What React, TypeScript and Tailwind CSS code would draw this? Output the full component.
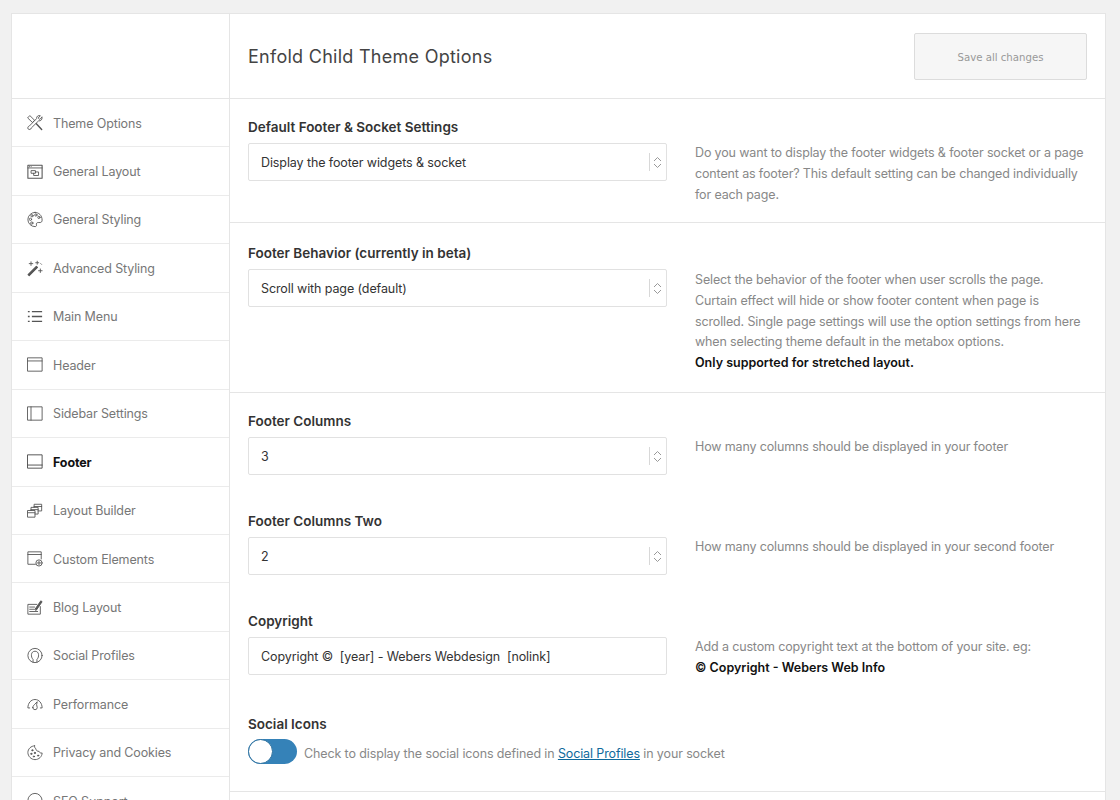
import React from 'react';

const iconProps = {
  width: 17,
  height: 17,
  viewBox: '0 0 18 18',
  fill: 'none',
  stroke: 'currentColor',
  strokeWidth: 1,
  strokeLinecap: 'round' as const,
  strokeLinejoin: 'round' as const,
};

const icons: Record<string, React.ReactNode> = {
  tools: (
    <svg {...iconProps}>
      <path d="M1 3.500 3.200 1.200 8.500 6.500 6.500 8.700z" />
      <path d="M10.500 10.500 16.500 16.800" strokeWidth="1.600" />
      <path d="M16.800 3.200 14.300 5.500 12.600 4 15 1.400C12.800.6 10.500 2 10.800 4.600L2.600 13c-1.600.3-2.200 2.200-1.200 3.400 1.200 1 3.200.4 3.400-1.200L13 7.200c2.600.3 4.600-1.700 3.800-4z" />
    </svg>
  ),
  layout: (
    <svg {...iconProps}>
      <rect x="1" y="2" width="16" height="14.500" strokeWidth="1.200" />
      <path d="M1 5h16M2.800 3.500h.1M4.600 3.500h.1" />
      <path d="M5 8h4.500v3H5zM7.500 11v2.500H13V9.500H9.500" />
    </svg>
  ),
  palette: (
    <svg {...iconProps}>
      <path d="M9 1a8 8 0 1 0 0 16c1.400 0 1.900-.9 1.600-2-.4-1.500.4-2.600 2-2.600h2.200c1.300 0 2.200-1 2.200-2.600C17 4.400 13.400 1 9 1z" />
      <circle cx="5.600" cy="4.800" r="1.300" />
      <circle cx="10" cy="3.900" r="1.300" />
      <circle cx="13.400" cy="6.600" r="1.300" />
      <circle cx="3.900" cy="8.800" r="1.300" />
      <circle cx="5.400" cy="13" r="1.300" />
    </svg>
  ),
  wand: (
    <svg {...iconProps}>
      <path d="M1.200 15.800 10.500 6.500l1.300 1.300-9.300 9.300z" strokeWidth="1.200" fill="currentColor" />
      <path d="M4.500 1.500v4M2.500 3.500h4M11.500.8v3.400M9.800 2.500h3.400M15 9.500v4M13 11.500h4M15.500 3.500l.8.800" />
    </svg>
  ),
  menu: (
    <svg {...iconProps} strokeWidth="1.500" strokeLinecap="butt">
      <path d="M1 3.500h2M5.500 3.500H17M1 9h2M5.500 9H17M1 14.500h2M5.500 14.500H17" />
    </svg>
  ),
  header: (
    <svg {...iconProps}>
      <rect x="1" y="1.500" width="16" height="15" />
      <path d="M1 5h16" />
    </svg>
  ),
  sidebar: (
    <svg {...iconProps}>
      <rect x="1" y="1.500" width="16" height="15" />
      <path d="M4.500 1.500v15" />
    </svg>
  ),
  footer: (
    <svg {...iconProps}>
      <rect x="1" y="1.500" width="16" height="15" />
      <path d="M1 13h16" />
    </svg>
  ),
  builder: (
    <svg {...iconProps}>
      <rect x="1" y="9" width="8" height="7.500" />
      <path d="M1 11.500h8M4.500 9V5.500h8v7.500H9M4.500 8h8" />
      <path d="M8 5.500V2h8.500v7.500h-4M8 4.500h8.500" />
    </svg>
  ),
  custom: (
    <svg {...iconProps}>
      <path d="M9.500 15.500H1v-14h15v8M1 4.500h15" />
      <circle cx="13.500" cy="14" r="3.500" />
      <path d="M13.500 12v4M11.500 14h4" />
    </svg>
  ),
  blog: (
    <svg {...iconProps}>
      <path d="M15 8v8.500H1V5.500h10" />
      <path d="M3 8.500h5.500M3 11h5M3 13.500h9" />
      <path d="M9 11 15.500 1.500l1.500 1L10.500 12z" fill="currentColor" />
    </svg>
  ),
  social: (
    <svg {...iconProps}>
      <circle cx="9" cy="9" r="8" />
      <path d="M6.800 16.500v-3.200C5.200 11.800 4.900 10 5 8c.2-2.400 1.800-3.800 4-3.800s3.800 1.400 4 3.800c.1 2-.2 3.800-1.800 5.300v3.200" />
    </svg>
  ),
  gauge: (
    <svg {...iconProps}>
      <path d="M3 14H1C1 8.500 4.500 4.500 9 4.500s8 4 8 9.500h-2" />
      <path d="M6.500 13.500a2.500 2.500 0 0 0 5 0c0-1.500-.7-1.900-.7-3.200l.7-3.300-2.800 3c-1.200 1-2.200 2-2.200 3.500z" />
    </svg>
  ),
  cookie: (
    <svg {...iconProps}>
      <path d="M8.500 1.500C4.500 1.500 1 5 1 9s3.500 8 8 8 8-3.500 8-7.500c-1.500.5-3-.3-3.500-1.800-1.800.2-3.500-1-3.500-3-1.200-.5-1.600-1.700-1.500-3.200z" />
      <circle cx="6" cy="6.500" r=".7" fill="currentColor" />
      <circle cx="4.800" cy="10.500" r=".7" fill="currentColor" />
      <circle cx="8.800" cy="9.500" r=".7" fill="currentColor" />
      <circle cx="7.800" cy="13.500" r=".7" fill="currentColor" />
      <circle cx="12.500" cy="12.500" r=".7" fill="currentColor" />
    </svg>
  ),
  seo: (
    <svg {...iconProps}>
      <circle cx="9" cy="9" r="8" />
    </svg>
  ),
};

const menuItems = [
  { label: 'Theme Options', icon: 'tools' },
  { label: 'General Layout', icon: 'layout' },
  { label: 'General Styling', icon: 'palette' },
  { label: 'Advanced Styling', icon: 'wand' },
  { label: 'Main Menu', icon: 'menu' },
  { label: 'Header', icon: 'header' },
  { label: 'Sidebar Settings', icon: 'sidebar' },
  { label: 'Footer', icon: 'footer', active: true },
  { label: 'Layout Builder', icon: 'builder' },
  { label: 'Custom Elements', icon: 'custom' },
  { label: 'Blog Layout', icon: 'blog' },
  { label: 'Social Profiles', icon: 'social' },
  { label: 'Performance', icon: 'gauge' },
  { label: 'Privacy and Cookies', icon: 'cookie' },
  { label: 'SEO Support', icon: 'seo' },
];

const Field: React.FC<{ value: string; select?: boolean }> = ({ value, select }) => (
  <div className="flex h-[38px] w-[419px] items-center justify-between rounded-[2px] border border-[#e1e1e1] bg-white pl-3 pr-[4px] text-[12.5px] tracking-[-0.1px] text-[#333]">
    <span className="pt-[3px] whitespace-pre">{value}</span>
    {select && (
      <span className="flex h-[18px] items-center border-l border-[#d8d8d8] pl-[3px] text-[#999]">
        <svg width="9" height="13" viewBox="0 0 9 13" fill="none" stroke="currentColor" strokeWidth="1">
          <path d="M1 5l3.500-3.500L8 5M1 8l3.500 3.500L8 8" />
        </svg>
      </span>
    )}
  </div>
);

const Label: React.FC<{ children: React.ReactNode; className?: string }> = ({ children, className }) => (
  <h3 className={`text-[13.5px] leading-[17px] font-semibold text-[#333] ${className ?? 'mb-[7px]'}`}>{children}</h3>
);

const Help: React.FC<{ children: React.ReactNode; className?: string }> = ({ children, className }) => (
  <div className={`w-[394px] text-[12.5px] leading-[20.8px] tracking-[-0.14px] text-[#888] ${className ?? ''}`}>
    {children}
  </div>
);

export default function App() {
  return (
    <div className="h-[800px] w-[1120px] overflow-hidden bg-[#f1f1f1] pt-[13px] pl-[11px] font-['Inter',sans-serif]">
      <div className="flex w-[1095px] border border-[#e5e5e5] bg-white">
        <aside className="w-[218px] shrink-0 border-r border-[#e5e5e5]">
          <div className="h-[85px] border-b border-[#e5e5e5]" />
          {menuItems.map((item) => (
            <div
              key={item.label}
              className={`flex h-[48.45px] items-center gap-[10px] border-b border-[#ebebeb] pl-[15px] text-[12.5px] tracking-[-0.13px] ${
                item.active ? 'font-bold text-[#111]' : 'text-[#777]'
              }`}
            >
              <span className={`flex w-[16px] shrink-0 justify-center ${item.active ? 'text-[#444]' : 'text-[#555]'}`}>
                {icons[item.icon]}
              </span>
              <span className="pt-[2.5px]">{item.label}</span>
            </div>
          ))}
        </aside>

        <main className="min-w-0 flex-1">
          <header className="flex h-[85px] items-center justify-between border-b border-[#e5e5e5] pr-[18px] pl-[18px]">
            <h1 className="text-[18px] tracking-[0.27px] text-[#444]">Enfold Child Theme Options</h1>
            <button className="mt-[1px] h-[47px] w-[173px] rounded-[2px] border border-[#dcdcdc] bg-[#f6f6f6] pt-[3px] font-['DejaVu_Sans_Condensed','DejaVu_Sans',sans-serif] text-[11.3px] text-[#999]">
              Save all changes
            </button>
          </header>

          <section className="h-[124px] border-b border-[#e5e5e5] pt-[20px] pl-[18px]">
            <Label>Default Footer &amp; Socket Settings</Label>
            <div className="flex gap-[28px]">
              <Field value="Display the footer widgets &amp; socket" select />
              <Help>
                Do you want to display the footer widgets &amp; footer socket or a page content as footer? This
                default setting can be changed individually for each page.
              </Help>
            </div>
          </section>

          <section className="h-[170px] border-b border-[#e5e5e5] pt-[22px] pl-[18px]">
            <Label>Footer Behavior (currently in beta)</Label>
            <div className="flex gap-[28px]">
              <Field value="Scroll with page (default)" select />
              <Help className="pt-[1px]">
                Select the behavior of the footer when user scrolls the page.
                <br />
                Curtain effect will hide or show footer content when page is
                <br />
                scrolled. Single page settings will use the option settings from here when selecting theme default in
                the metabox options.
                <br />
                <strong className="font-semibold tracking-normal text-[#111]">Only supported for stretched layout.</strong>
              </Help>
            </div>
          </section>

          <section className="h-[399px] border-b border-[#e5e5e5] pt-[20px] pl-[18px]">
            <Label>Footer Columns</Label>
            <div className="flex gap-[28px]">
              <Field value="3" select />
              <Help>How many columns should be displayed in your footer</Help>
            </div>

            <div className="mt-[38px]">
              <Label>Footer Columns Two</Label>
              <div className="flex gap-[28px]">
                <Field value="2" select />
                <Help>How many columns should be displayed in your second footer</Help>
              </div>
            </div>

            <div className="mt-[38px]">
              <Label>Copyright</Label>
              <div className="flex gap-[28px]">
                <Field value="Copyright ©  [year] - Webers Webdesign  [nolink]" />
                <Help>
                  Add a custom copyright text at the bottom of your site. eg:
                  <br />
                  <strong className="font-semibold tracking-normal text-[#111]">© Copyright - Webers Web Info</strong>
                </Help>
              </div>
            </div>

            <div className="mt-[37px]">
              <Label className="mb-[6px]">Social Icons</Label>
              <div className="flex items-center gap-[7px]">
                <span className="flex h-[25px] w-[49px] items-center rounded-full bg-[#3582b8]">
                  <span className="h-[25px] w-[25px] rounded-full border border-[#2a6f9e] bg-white" />
                </span>
                <p className="pt-[6px] text-[12.5px] tracking-[-0.12px] text-[#888]">
                  Check to display the social icons defined in{' '}
                  <a className="text-[#0f6a9c] underline">Social Profiles</a> in your socket
                </p>
              </div>
            </div>
          </section>
        </main>
      </div>
    </div>
  );
}
